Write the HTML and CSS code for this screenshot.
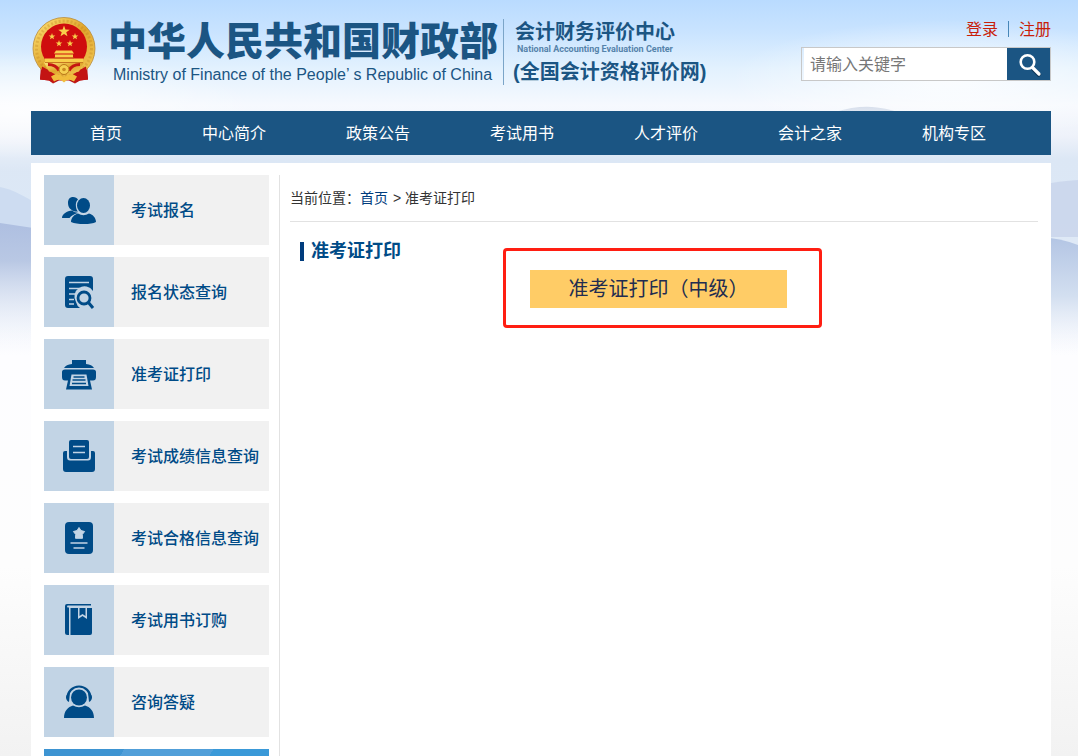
FILE: index.html
```html
<!DOCTYPE html>
<html lang="zh-CN">
<head>
<meta charset="utf-8">
<meta name="viewport" content="width=device-width, initial-scale=1">
<title>准考证打印</title>
<link rel="stylesheet" href="styles.css">
</head>
<body>
<svg class="scenery" viewBox="0 0 1078 756" preserveAspectRatio="none" aria-hidden="true">
  <defs>
    <linearGradient id="sky" x1="0" y1="0" x2="0" y2="1">
      <stop offset="0" stop-color="#b9dbff"/><stop offset=".04" stop-color="#c8e3ff"/><stop offset=".09" stop-color="#e2f1fe"/>
      <stop offset=".14" stop-color="#f6f9fe"/><stop offset=".18" stop-color="#eef2fa"/><stop offset=".21" stop-color="#dce7f5"/>
      <stop offset=".28" stop-color="#dce8f6"/><stop offset=".36" stop-color="#e2eaf6"/><stop offset=".47" stop-color="#fdfdff"/>
      <stop offset=".75" stop-color="#fdfdfd"/><stop offset="1" stop-color="#f2f2f2"/>
    </linearGradient>
    <linearGradient id="hillLeft" x1="0" y1="0" x2="0" y2="1">
      <stop offset="0" stop-color="#aebfe1"/><stop offset=".3" stop-color="#b9c8e4"/><stop offset="1" stop-color="#fbfcff" stop-opacity="0"/>
    </linearGradient>
    <linearGradient id="hillRight" x1="0" y1="0" x2="0" y2="1">
      <stop offset="0" stop-color="#b3c5e4"/><stop offset=".5" stop-color="#d3dff0"/><stop offset="1" stop-color="#fbfcff" stop-opacity="0"/>
    </linearGradient>
    <linearGradient id="ridge" x1="0" y1="0" x2="0" y2="1">
      <stop offset="0" stop-color="#c9d3e4" stop-opacity=".7"/><stop offset="1" stop-color="#c9d3e4" stop-opacity=".2"/>
    </linearGradient>
    <radialGradient id="cloud">
      <stop offset="0" stop-color="#fff" stop-opacity=".8"/><stop offset="1" stop-color="#fff" stop-opacity="0"/>
    </radialGradient>
  </defs>
  <rect width="1078" height="756" fill="url(#sky)"/>
  <ellipse cx="20" cy="112" rx="240" ry="60" fill="url(#cloud)"/>
  <ellipse cx="950" cy="80" rx="220" ry="60" fill="url(#cloud)"/>
  <path d="M835 112Q855 106 872 107Q886 108 898 112L930 120H825Z" fill="url(#ridge)"/>
  <path d="M0 187Q16 190 40 206V236H0Z" fill="#cddcf1"/>
  <path d="M0 223L40 229V350H0Z" fill="url(#hillLeft)"/>
  <path d="M1040 185Q1060 181 1078 180V237H1040Z" fill="#c3d0e8" opacity=".65"/>
  <path d="M1040 237Q1060 238 1078 245V356H1040Z" fill="url(#hillRight)"/>
</svg>

<div class="page">
  <header class="header">
    <div class="brand">
      <svg class="emblem" viewBox="0 0 64 68" role="img" aria-label="国徽">
        <defs>
          <linearGradient id="gold" x1="0" y1="0" x2="1" y2="1">
            <stop offset="0" stop-color="#ffe67a"/><stop offset=".5" stop-color="#e0a52c"/><stop offset="1" stop-color="#f5cf5c"/>
          </linearGradient>
          <path id="star" d="M0-5L1.2-1.6 4.8-1.5 1.9.6 2.9 4 0 2-2.9 4-1.9.6-4.8-1.5-1.2-1.6Z"/>
        </defs>
        <path d="M9 48L8 63 17 64 21 67 27 64H37L43 67 48 64 56 63 55 48Z" fill="#b70f12"/>
        <path d="M13 52L11 61M19 55L21 66M45 55L43 66M51 52L53 61" stroke="#e8582d" stroke-width="1"/>
        <circle cx="32" cy="32" r="31" fill="url(#gold)" stroke="#b98a3a" stroke-width=".8"/>
        <circle cx="32" cy="32" r="27.500" fill="none" stroke="#b9791b" stroke-width="3" stroke-dasharray="2 2" opacity=".3"/>
        <path d="M10 50Q18 54 23 58L22 66 17 64 8 63ZM54 50Q46 54 41 58L42 66 48 64 56 63Z" fill="#c31413"/>
        <circle cx="32" cy="30" r="23" fill="#cf0d0e"/>
        <path d="M12 46H52L47 55Q32 60 17 55Z" fill="url(#gold)"/>
        <path d="M16 48Q24 48 27 54M48 48Q40 48 37 54" fill="none" stroke="#c51711" stroke-width="3"/>
        <g fill="#f8cf4b">
          <use href="#star" transform="translate(32 15) scale(1.200)"/>
          <use href="#star" transform="translate(20 20) scale(.700)"/>
          <use href="#star" transform="translate(43 20) scale(.700)"/>
          <use href="#star" transform="translate(27 27) scale(.700)"/>
          <use href="#star" transform="translate(38 27) scale(.700)"/>
          <path d="M24 34H40L42 37H22ZM23 38H41V41H23ZM13 42H51V46H13Z"/>
        </g>
        <path d="M22 41.500H42M13 46H51" stroke="#bd6c19" stroke-width=".8"/>
        <circle cx="32" cy="53" r="5" fill="#f6cf50" stroke="#b97718" stroke-width="1"/>
        <circle cx="32" cy="53" r="1.800" fill="#c98a22"/>
        <path d="M19 60Q26 55 32 61Q38 55 45 60L42 65Q36 61 32 66Q28 61 22 65Z" fill="#f1bd3c"/>
      </svg>
      <div class="ministry">
        <p class="ministry-name">中华人民共和国财政部</p>
        <p class="ministry-en">Ministry of Finance of the People’ s Republic of China</p>
      </div>
      <div class="center">
        <p class="center-name">会计财务评价中心</p>
        <p class="center-en">National Accounting Evaluation Center</p>
        <p class="center-site">(全国会计资格评价网)</p>
      </div>
    </div>
    <div class="tools">
      <div class="account"><a href="#">登录</a><a href="#">注册</a></div>
      <form class="search">
        <input class="search-input" type="text" placeholder="请输入关键字" aria-label="请输入关键字">
        <button class="search-button" type="button" aria-label="搜索">
          <svg width="24" height="24" viewBox="0 0 24 24" fill="none"><path d="M15 16L22 23" stroke="#0c3455" stroke-width="4"/><circle cx="9.500" cy="9" r="6.800" stroke="#fff" stroke-width="2.600"/><path d="M14.500 14.500L21 21" stroke="#fff" stroke-width="3.200" stroke-linecap="round"/></svg>
        </button>
      </form>
    </div>
  </header>

  <nav class="nav">
    <a href="#">首页</a><a href="#">中心简介</a><a href="#">政策公告</a><a href="#">考试用书</a><a href="#">人才评价</a><a href="#">会计之家</a><a href="#">机构专区</a>
  </nav>

  <div class="body">
    <aside class="side">
      <a class="side-item" href="#"><span class="side-icon"><svg viewBox="0 0 36 36"><path d="M7 11C7 7 9 5 12 5C14.500 5 16 6 17 7.500C15 9 14.500 12 15 15C15.300 17 16 18.500 17 19.500C12 20 7 17 7 11ZM11 18.500C13 20 15 20.500 17 21C12.500 22 10 24 8.500 26H1C1 22 6 19 11 18.500Z"/><ellipse cx="22.500" cy="13.500" rx="6.500" ry="7.500"/><path d="M17 21.500Q22.500 25 28 21.500C32 22.500 35 26 35 30Q31 32 23 32T10 30C10 26 13 22.500 17 21.500Z"/></svg></span><span class="side-label">考试报名</span></a>
      <a class="side-item" href="#"><span class="side-icon"><svg viewBox="0 0 36 36"><path d="M7 2H29Q32 2 32 5V17A9.500 9.500 0 0 0 15 28Q16 32 19 34H7Q4 34 4 31V5Q4 2 7 2Z"/><path d="M8 8.500H28M8 14.500H19M8 20H15M8 25.500H13M8 30H13" stroke="#c2d4e5" stroke-width="1.400"/><circle cx="23" cy="24" r="8.500" fill="#c2d4e5"/><circle cx="23" cy="24" r="6" fill="none" stroke="#004b87" stroke-width="2.800"/><path d="M27 28L32 34" stroke="#004b87" stroke-width="3"/></svg></span><span class="side-label">报名状态查询</span></a>
      <a class="side-item" href="#"><span class="side-icon"><svg viewBox="0 0 36 36"><path d="M11 4H25V8Q31 8.500 33 12H3Q5 8.500 11 8Z"/><path d="M4 13.500H32Q35 13.500 35 16V21Q35 24.500 32 24.500H29L31 33.500H5L7 24.500H4Q1 24.500 1 21V16Q1 13.500 4 13.500Z"/><path d="M10.500 18.500H25.500L27.500 30H8.500Z" fill="#c2d4e5"/><path d="M12.500 21H23.500M11.500 24H24.500M11 27.500H25" stroke="#004b87" stroke-width="1.700"/></svg></span><span class="side-label">准考证打印</span></a>
      <a class="side-item" href="#"><span class="side-icon"><svg viewBox="0 0 36 36"><path d="M4 13H6V19Q6 22.500 9 22.500H27Q30 22.500 30 19V13H32Q34 13 34 15V31Q34 34 31 34H5Q2 34 2 31V15Q2 13 4 13Z"/><path d="M10 2H26Q28 2 28 4V19Q28 21 26 21H10Q8 21 8 19V4Q8 2 10 2Z"/><path d="M12 8.500H24M12 14.500H24" stroke="#c2d4e5" stroke-width="1.500"/></svg></span><span class="side-label">考试成绩信息查询</span></a>
      <a class="side-item" href="#"><span class="side-icon"><svg viewBox="0 0 36 36"><rect x="4" y="2" width="28" height="32" rx="4"/><path d="M18 7.500L20 10.600 23.600 11.500 21.300 14.500 21.500 18.300H14.500L14.700 14.500 12.400 11.500 16 10.600Z" fill="#c2d4e5" stroke="#c2d4e5" stroke-width="1" stroke-linejoin="round"/><path d="M9.500 23H26.500M12.500 28H23.500" stroke="#c2d4e5" stroke-width="1.500"/></svg></span><span class="side-label">考试合格信息查询</span></a>
      <a class="side-item" href="#"><span class="side-icon"><svg viewBox="0 0 36 36"><path d="M6 2H30V3.500H6.500Q5.500 4.500 6.500 5.500H8V33H6.500Q4 33 4 30.500V4Q4 2 6 2Z"/><path d="M9.500 6H17V17L21.500 14 26 17V6H31V31Q31 33 29 33H9.500Z"/><path d="M18.500 6H24.500V14L21.500 12 18.500 14Z"/></svg></span><span class="side-label">考试用书订购</span></a>
      <a class="side-item" href="#"><span class="side-icon"><svg viewBox="0 0 36 36"><path d="M6.500 14A11.500 11.500 0 0 1 29.500 14" fill="none" stroke="#004b87" stroke-width="2.200"/><path d="M9 8.500L8 18Q5 16.500 5 13Q5.500 9.500 9 8.500ZM27 8.500L28 18Q31 16.500 31 13Q30.500 9.500 27 8.500Z"/><circle cx="18" cy="13.500" r="8"/><path d="M12 21.500Q18 25 24 21.500C29 23 33 27 33 34H3C3 27 7 23 12 21.500Z"/></svg></span><span class="side-label">咨询答疑</span></a>
      <div class="banner"></div>
    </aside>
    <main class="main">
      <div class="crumbs">当前位置：<a href="#">首页</a> &gt; 准考证打印</div>
      <section class="section">
        <h1 class="section-title">准考证打印</h1>
        <div class="highlight"><a class="print-link" href="#">准考证打印（中级）</a></div>
      </section>
    </main>
  </div>
</div>
</body>
</html>
```
FILE: styles.css
```css
* {
  box-sizing: border-box;
}

body {
  margin: 0;
  position: relative;
  color: #333;
  font: 16px/24px "Liberation Sans", "Noto Sans CJK SC", sans-serif;
}

a {
  color: inherit;
  text-decoration: none;
}

p,
h1 {
  margin: 0;
}

.scenery {
  position: absolute;
  top: 0;
  left: 0;
  z-index: -1;
  width: 100%;
  height: 100%;
}

.page {
  display: flex;
  flex-direction: column;
  min-height: 100vh;
  padding: 0 27px 0 31px;
}

.header {
  display: flex;
  justify-content: space-between;
  align-items: flex-start;
  padding: 16px 0 26px;
}

.brand {
  display: flex;
  color: #1b5583;
  white-space: nowrap;
}

.emblem {
  width: 64px;
  height: 69px;
  margin: 0 12px 0 1px;
}

.ministry {
  padding-right: 5px;
}

.ministry-name {
  font-size: 39px;
  font-weight: 900;
  line-height: 52px;
}

.ministry-en {
  padding-left: 5px;
  font-size: 16px;
  line-height: 14px;
}

.center {
  height: 66px;
  margin-top: 3px;
  padding-left: 9px;
  border-left: 1px solid #7ba5c8;
}

.center-name {
  padding-left: 2px;
  font-size: 20px;
  font-weight: 700;
  line-height: 26px;
}

.center-en {
  padding-left: 4px;
  color: #5583ab;
  font-family: Roboto, "Liberation Sans", sans-serif;
  font-size: 9px;
  font-weight: 700;
  line-height: 8px;
}

.center-site {
  font-size: 20px;
  font-weight: 700;
  line-height: 38px;
}

.tools {
  width: 250px;
}

.account {
  display: flex;
  justify-content: flex-end;
  padding-top: 2px;
  color: #c81e0a;
}

.account a + a {
  position: relative;
  margin-left: 10px;
  padding-left: 11px;
}

.account a + a::before {
  content: "";
  position: absolute;
  top: 3px;
  left: 0;
  width: 1px;
  height: 16px;
  background: #4787b8;
}

.search {
  display: flex;
  height: 34px;
  margin-top: 5px;
  border: 1px solid #c8c8c8;
}

.search-input {
  flex: 1;
  min-width: 0;
  margin-left: 2px;
  padding: 2px 6px 0;
  border: 0;
  background: #fff;
  font: inherit;
}

.search-input::placeholder {
  color: #777;
}

.search-button {
  display: grid;
  place-items: center;
  width: 43px;
  padding: 2px 0 0 3px;
  border: 0;
  background: #1b5583;
}

.nav {
  display: flex;
  gap: 80px;
  padding: 2px 59px 0;
  background: #1b5583;
  color: #fff;
  line-height: 42px;
  white-space: nowrap;
}

.body {
  display: flex;
  flex: 1;
  gap: 10px;
  margin-top: 8px;
  padding: 12px 13px 0;
  background: #fff;
}

.side {
  display: flex;
  flex-direction: column;
  gap: 12px;
  width: 225px;
}

.side-item {
  display: flex;
  align-items: center;
  height: 70px;
  background: #f1f1f1;
  color: #004b87;
  font-weight: 500;
}

.side-icon {
  display: grid;
  place-items: center;
  width: 70px;
  height: 70px;
  background: #c2d4e5;
}

.side-icon svg {
  width: 36px;
  height: 36px;
  fill: #004b87;
}

.side-label {
  padding: 2px 0 0 17px;
}

.banner {
  flex: 1;
  min-height: 7px;
  background: linear-gradient(120deg, #3d94d2 0 35%, #519fd9 35% 74%, #3a99d8 74%);
}

.main {
  flex: 1;
  padding-left: 10px;
  border-left: 1px solid #e2e2e2;
}

.crumbs {
  padding: 11px 0;
  border-bottom: 1px solid #e2e2e2;
  font-size: 14px;
}

.crumbs a {
  margin-right: 1px;
  color: #003c7d;
}

.section {
  display: flex;
  align-items: flex-start;
  gap: 102px;
}

.section-title {
  margin: 20px 0 0 10px;
  padding-left: 7px;
  border-left: 4px solid #003c7d;
  color: #004b87;
  font-size: 18px;
  line-height: 19px;
}

.highlight {
  width: 319px;
  margin-top: 26px;
  padding: 19px 32px 17px 24px;
  border: 3px solid #ff1e12;
  border-radius: 4px;
}

.print-link {
  display: block;
  background: #fc6;
  color: #222c50;
  font-size: 20px;
  line-height: 38px;
  text-align: center;
}
```
